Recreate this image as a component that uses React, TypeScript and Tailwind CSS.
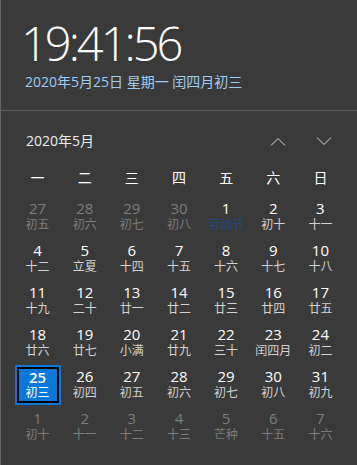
import React from 'react';

type Day = { d: number; l: string; kind?: 'out' | 'holiday' | 'today' };

const WEEK = ['一', '二', '三', '四', '五', '六', '日'];

const ROWS: Day[][] = [
  [
    { d: 27, l: '初五', kind: 'out' },
    { d: 28, l: '初六', kind: 'out' },
    { d: 29, l: '初七', kind: 'out' },
    { d: 30, l: '初八', kind: 'out' },
    { d: 1, l: '劳动节', kind: 'holiday' },
    { d: 2, l: '初十' },
    { d: 3, l: '十一' },
  ],
  [
    { d: 4, l: '十二' },
    { d: 5, l: '立夏' },
    { d: 6, l: '十四' },
    { d: 7, l: '十五' },
    { d: 8, l: '十六' },
    { d: 9, l: '十七' },
    { d: 10, l: '十八' },
  ],
  [
    { d: 11, l: '十九' },
    { d: 12, l: '二十' },
    { d: 13, l: '廿一' },
    { d: 14, l: '廿二' },
    { d: 15, l: '廿三' },
    { d: 16, l: '廿四' },
    { d: 17, l: '廿五' },
  ],
  [
    { d: 18, l: '廿六' },
    { d: 19, l: '廿七' },
    { d: 20, l: '小满' },
    { d: 21, l: '廿九' },
    { d: 22, l: '三十' },
    { d: 23, l: '闰四月' },
    { d: 24, l: '初二' },
  ],
  [
    { d: 25, l: '初三', kind: 'today' },
    { d: 26, l: '初四' },
    { d: 27, l: '初五' },
    { d: 28, l: '初六' },
    { d: 29, l: '初七' },
    { d: 30, l: '初八' },
    { d: 31, l: '初九' },
  ],
  [
    { d: 1, l: '初十', kind: 'out' },
    { d: 2, l: '十一', kind: 'out' },
    { d: 3, l: '十二', kind: 'out' },
    { d: 4, l: '十三', kind: 'out' },
    { d: 5, l: '芒种', kind: 'out' },
    { d: 6, l: '十五', kind: 'out' },
    { d: 7, l: '十六', kind: 'out' },
  ],
];

const FONT = "font-['Open_Sans','Noto_Sans_CJK_SC',sans-serif]";

function Chevron({ up }: { up?: boolean }) {
  return (
    <svg width="16" height="9" viewBox="0 0 16 9" fill="none">
      <path
        d={up ? 'M1 8.5 L8 1.5 L15 8.5' : 'M1 0.5 L8 7.5 L15 0.5'}
        stroke="#d8d8d8"
        strokeWidth="1"
      />
    </svg>
  );
}

function Cell({ day }: { day: Day }) {
  if (day.kind === 'today') {
    return (
      <div className="flex h-[42px] items-center justify-center">
        <div className="h-[40px] w-[46px] border-2 border-[#0a78d6] bg-black p-[2px]">
          <div className="flex h-full w-full flex-col items-center bg-[#0a78d6]">
            <span className="text-[15px] font-semibold leading-[16px] text-white">{day.d}</span>
            <span className="mt-[1px] text-[12px] leading-[14px] text-white">{day.l}</span>
          </div>
        </div>
      </div>
    );
  }
  const num = day.kind === 'out' ? 'text-[#7c7c7c]' : 'text-white';
  const lunar =
    day.kind === 'out'
      ? 'text-[#7c7c7c]'
      : day.kind === 'holiday'
        ? 'text-[#1c4c84]'
        : 'text-[#d2d2d2]';
  return (
    <div className="flex h-[42px] items-center justify-center">
      <div className="flex h-[40px] w-[46px] flex-col items-center pt-[3px]">
        <span className={`text-[15px] leading-[16px] ${num}`}>{day.d}</span>
        <span className={`mt-[2px] text-[12px] leading-[14px] ${lunar}`}>{day.l}</span>
      </div>
    </div>
  );
}

export default function App() {
  return (
    <div className={`h-[465px] w-[357px] overflow-hidden border-l border-[#666] bg-[#3a3a3a] ${FONT}`}>
      {/* clock */}
      <div className="h-[110px] pl-[20px] pt-[15px]">
        <div className="text-[47px] font-light leading-[56px] tracking-[-3px] text-white">19:41:56</div>
        <div className="mt-[1px] pl-[4px] text-[14px] leading-[20px] text-[#9fcdf2]">2020年5月25日 星期一 闰四月初三</div>
      </div>
      <div className="h-px bg-[#5e5e5e]" />

      {/* month header */}
      <div className="flex h-[58px] items-center pl-[25px] pr-[25px]">
        <span className="flex-1 text-[14px] text-[#ececec]">2020年5月</span>
        <div className="flex items-center gap-[30px] pt-[2px]">
          <Chevron up />
          <Chevron />
        </div>
      </div>

      {/* weekdays */}
      <div className="grid grid-cols-7 px-[13px]">
        {WEEK.map((w) => (
          <div key={w} className="flex h-[18px] items-center justify-center text-[14px] leading-[18px] text-white">
            {w}
          </div>
        ))}
      </div>

      {/* days */}
      <div className="grid grid-cols-7 px-[13px] pt-[9px]">
        {ROWS.flat().map((day, i) => (
          <Cell key={i} day={day} />
        ))}
      </div>
    </div>
  );
}
